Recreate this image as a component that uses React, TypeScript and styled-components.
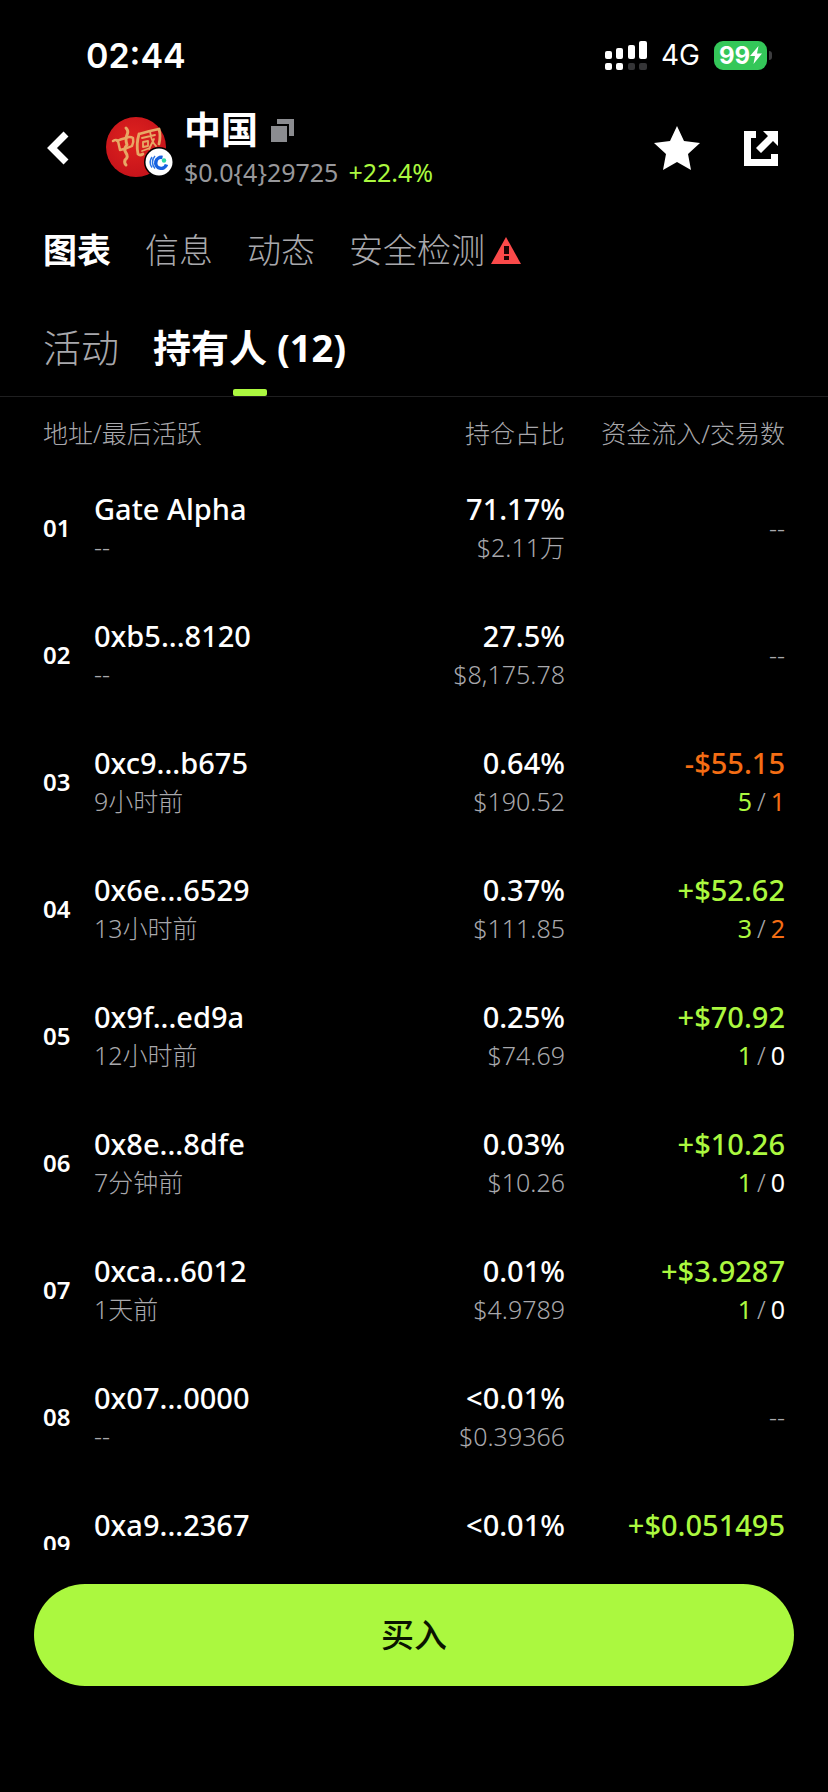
import React from "react";
import styled, { createGlobalStyle } from "styled-components";

const lime = "#abf83f";
const orange = "#f46d14";
const muted = "#98989b";
const mutedThin = "#a8a8ac";

const GlobalStyle = createGlobalStyle`
  * { box-sizing: border-box; }
  body {
    margin: 0;
    background: #000;
    color: #fff;
    font-family: "Noto Sans", "Noto Sans CJK SC", sans-serif;
  }
  button { font: inherit; color: inherit; background: none; border: 0; padding: 0; cursor: pointer; }
  svg { display: block; }
`;

const Screen = styled.div`
  display: flex;
  flex-direction: column;
  height: 100vh;
  background: #000;
`;

const StatusBar = styled.div`
  display: flex;
  align-items: center;
  justify-content: space-between;
  height: 106px;
  padding: 4px 56px 0 86px;
  font-family: Inter, sans-serif;
`;

const Clock = styled.span`
  font-size: 34px;
  font-weight: 600;
`;

const StatusIcons = styled.div`
  display: flex;
  align-items: center;
  gap: 14px;
`;

const Network = styled.span`
  font-size: 28px;
  font-weight: 400;
`;

const Battery = styled.div`
  display: flex;
  align-items: center;
  gap: 2px;
`;

const BatteryBody = styled.div`
  display: flex;
  align-items: center;
  justify-content: center;
  width: 53px;
  height: 29px;
  border-radius: 9px;
  background: #34c759;
  font-size: 24px;
  font-weight: 700;
`;

const BatteryCap = styled.div`
  width: 3px;
  height: 9px;
  border-radius: 0 3px 3px 0;
  background: #3c3c3e;
`;

const TokenHeader = styled.header`
  display: flex;
  align-items: center;
  height: 84px;
  padding: 0 50px 0 47px;
`;

const AvatarBox = styled.div`
  position: relative;
  margin: 0 0 3px 37px;
`;

const Badge = styled.div`
  position: absolute;
  right: -8px;
  bottom: 0;
`;

const TokenText = styled.div`
  display: flex;
  flex-direction: column;
  flex: 1;
  margin-left: 18px;
`;

const TitleLine = styled.div`
  display: flex;
  align-items: center;
  gap: 13px;
`;

const Title = styled.h1`
  margin: 0;
  font-size: 37px;
  line-height: 48px;
  font-weight: 700;
`;

const PriceLine = styled.div`
  display: flex;
  gap: 10px;
  font-size: 25px;
  line-height: 36px;
  color: ${muted};
`;

const Change = styled.span`
  color: ${lime};
`;

const Actions = styled.div`
  display: flex;
  align-items: center;
  gap: 44px;
`;

const PrimaryTabs = styled.nav`
  display: flex;
  align-items: center;
  gap: 34px;
  height: 116px;
  padding: 4px 43px 0;
`;

const PrimaryTab = styled.button<{ $active?: boolean }>`
  display: flex;
  align-items: center;
  gap: 6px;
  font-size: 34px;
  line-height: 48px;
  font-weight: ${(p) => (p.$active ? 700 : 300)};
  color: ${(p) => (p.$active ? "#fff" : mutedThin)};
`;

const SubTabs = styled.nav`
  display: flex;
  gap: 34px;
  height: 91px;
  padding: 0 43px;
  border-bottom: 1px solid #1f1f20;
`;

const SubTab = styled.button<{ $active?: boolean }>`
  display: flex;
  flex-direction: column;
  align-items: center;
  justify-content: space-between;
  padding-top: 17px;
  font-size: 38px;
  line-height: 48px;
  font-weight: ${(p) => (p.$active ? 700 : 300)};
  color: ${(p) => (p.$active ? "#fff" : mutedThin)};
`;

const Underline = styled.span`
  width: 34px;
  height: 7px;
  border-radius: 2px;
  background: ${lime};
`;

const ListArea = styled.main`
  flex: 1;
  min-height: 0;
  overflow-y: auto;
  scrollbar-width: none;
  padding: 0 43px;
`;

const Table = styled.table`
  width: 100%;
  table-layout: fixed;
  border-collapse: collapse;
`;

const HeadCell = styled.th<{ $right?: boolean }>`
  height: 67px;
  padding: 4px 0 0;
  font-size: 25px;
  line-height: 36px;
  font-weight: 300;
  white-space: nowrap;
  color: ${mutedThin};
  text-align: ${(p) => (p.$right ? "right" : "left")};
`;

const Cell = styled.td<{ $right?: boolean }>`
  height: 127px;
  padding: 0;
  white-space: nowrap;
  text-align: ${(p) => (p.$right ? "right" : "left")};
`;

const Rank = styled.span`
  font-size: 24px;
  font-weight: 600;
`;

const toneColor = { plain: "#fff", up: lime, down: orange };
type Tone = keyof typeof toneColor;

const MainText = styled.div<{ $tone?: Tone }>`
  font-size: 29px;
  line-height: 38px;
  font-weight: 500;
  color: ${(p) => toneColor[p.$tone ?? "plain"]};
`;

const SubText = styled.div`
  font-size: 25px;
  line-height: 38px;
  font-weight: 300;
  color: ${mutedThin};
`;

const Trades = styled(SubText)`
  display: flex;
  justify-content: flex-end;
  gap: 5px;
`;

const Count = styled.span<{ $tone: Tone }>`
  font-weight: 400;
  color: ${(p) => toneColor[p.$tone]};
`;

const Footer = styled.footer`
  padding: 34px 34px 106px;
`;

const BuyButton = styled.button`
  width: 100%;
  height: 102px;
  padding-bottom: 4px;
  border-radius: 51px;
  background: ${lime};
  color: #0a1400;
  font-size: 33px;
  font-weight: 500;
`;

type Holder = {
  name: string;
  seen: string;
  share: string;
  value: string;
  flow?: string;
  buys?: number;
  sells?: number;
};

const holders: Holder[] = [
  { name: "Gate Alpha", seen: "--", share: "71.17%", value: "$2.11万" },
  { name: "0xb5...8120", seen: "--", share: "27.5%", value: "$8,175.78" },
  { name: "0xc9...b675", seen: "9小时前", share: "0.64%", value: "$190.52", flow: "-$55.15", buys: 5, sells: 1 },
  { name: "0x6e...6529", seen: "13小时前", share: "0.37%", value: "$111.85", flow: "+$52.62", buys: 3, sells: 2 },
  { name: "0x9f...ed9a", seen: "12小时前", share: "0.25%", value: "$74.69", flow: "+$70.92", buys: 1, sells: 0 },
  { name: "0x8e...8dfe", seen: "7分钟前", share: "0.03%", value: "$10.26", flow: "+$10.26", buys: 1, sells: 0 },
  { name: "0xca...6012", seen: "1天前", share: "0.01%", value: "$4.9789", flow: "+$3.9287", buys: 1, sells: 0 },
  { name: "0x07...0000", seen: "--", share: "<0.01%", value: "$0.39366" },
  { name: "0xa9...2367", seen: "1天前", share: "<0.01%", value: "$0.051495", flow: "+$0.051495", buys: 1, sells: 0 },
];

const SignalIcon = () => (
  <svg width="42" height="29" viewBox="0 0 42 29" aria-hidden="true">
    <g fill="#fff">
      <rect x="0" y="10" width="7" height="8" rx="2" />
      <rect x="11" y="7" width="7" height="11" rx="2" />
      <rect x="23" y="4" width="7" height="14" rx="2" />
      <rect x="34" y="0" width="8" height="18" rx="2" />
      <rect x="0" y="22" width="7" height="7" rx="2" />
      <rect x="11" y="22" width="7" height="7" rx="2" />
    </g>
    <rect x="23" y="22" width="7" height="7" rx="2" fill="#353537" />
    <rect x="34" y="22" width="8" height="7" rx="2" fill="#353537" />
  </svg>
);

const BoltIcon = () => (
  <svg width="12" height="18" viewBox="0 0 12 18" aria-hidden="true">
    <path d="M8.5 0L0 10h5L3.5 18 12 7.500H7z" fill="#fff" />
  </svg>
);

const BackIcon = () => (
  <svg width="22" height="34" viewBox="0 0 22 34" aria-hidden="true">
    <path d="M19 3L5 17l14 14" fill="none" stroke="#fff" strokeWidth="7" />
  </svg>
);

const TokenAvatar = () => (
  <svg width="60" height="60" viewBox="0 0 60 60" aria-hidden="true">
    <defs>
      <radialGradient id="red" cx="45%" cy="40%" r="65%">
        <stop offset="0" stopColor="#e0231f" />
        <stop offset="1" stopColor="#c4121a" />
      </radialGradient>
    </defs>
    <circle cx="30" cy="30" r="30" fill="url(#red)" />
    <g fill="none" stroke="#e8a765" strokeLinecap="round" strokeLinejoin="round">
      <path d="M7 24q3-2 5 0l2 9q6-1 12-4 2-4 1-8-3-2-7 0-5 1-9 3" strokeWidth="2.500" />
      <path d="M20 11q3 3 1 7t0 10q-4 4-1 8t-1 7q-1 3 1 5" strokeWidth="3" />
      <path d="M33 17q-3 10-1 20 2 2 5 0M33 17q10-3 20-5 2 7 0 15" strokeWidth="2.800" />
      <path d="M36 21l13-3M37 25l5-1v5l-5 1zM44 14q1 10 6 15M36 34l8-3M48 22l-5 10" strokeWidth="1.800" />
    </g>
  </svg>
);

const ChainBadge = () => (
  <svg width="30" height="30" viewBox="0 0 30 30" aria-hidden="true">
    <circle cx="15" cy="15" r="15" fill="#000" />
    <circle cx="15" cy="15" r="13.500" fill="#fff" />
    <path d="M18.500 10.500a5.500 5.500 0 1 0 4 7" fill="none" stroke="#1762e0" strokeWidth="3.500" />
    <path d="M11 9a9 9 0 0 0 0 12.500M8 10a9 9 0 0 0 0 10.500" fill="none" stroke="#2a74e5" strokeWidth="1.500" />
    <circle cx="20" cy="13.500" r="2.200" fill="#2bd9a5" />
  </svg>
);

const CopyIcon = () => (
  <svg width="23" height="23" viewBox="0 0 23 23" aria-hidden="true">
    <path d="M0 7h16v16H0zM6 0h17v17h-5V5H6z" fill="#8b8c90" />
  </svg>
);

const StarIcon = () => (
  <svg width="46" height="44" viewBox="0 0 46 44" aria-hidden="true">
    <path d="M23 0l7 15 16 2-12 11 3 16-14-8-14 8 3-16L0 17l16-2z" fill="#fff" />
  </svg>
);

const ShareIcon = () => (
  <svg width="34" height="35" viewBox="0 0 34 35" aria-hidden="true">
    <path d="M0 0h12v7H7v21h20v-5h7v12H0z" fill="#fff" />
    <path d="M19 0h15v15l-5-5-12 12-5-5L24 5z" fill="#fff" />
  </svg>
);

const WarningIcon = () => (
  <svg width="30" height="27" viewBox="0 0 30 27" aria-hidden="true">
    <path d="M15 0l15 27H0z" fill="#fb4a4a" />
    <path d="M13 9h5v8h-5zM13 19h5v4h-5z" fill="#1a0505" />
  </svg>
);

export default function App() {
  return (
    <Screen>
      <GlobalStyle />
      <StatusBar>
        <Clock>02:44</Clock>
        <StatusIcons>
          <SignalIcon />
          <Network>4G</Network>
          <Battery>
            <BatteryBody>
              99
              <BoltIcon />
            </BatteryBody>
            <BatteryCap />
          </Battery>
        </StatusIcons>
      </StatusBar>

      <TokenHeader>
        <button aria-label="返回"><BackIcon /></button>
        <AvatarBox>
          <TokenAvatar />
          <Badge><ChainBadge /></Badge>
        </AvatarBox>
        <TokenText>
          <TitleLine>
            <Title>中国</Title>
            <button aria-label="复制"><CopyIcon /></button>
          </TitleLine>
          <PriceLine>
            <span>{"$0.0{4}29725"}</span>
            <Change>+22.4%</Change>
          </PriceLine>
        </TokenText>
        <Actions>
          <button aria-label="收藏"><StarIcon /></button>
          <button aria-label="分享"><ShareIcon /></button>
        </Actions>
      </TokenHeader>

      <PrimaryTabs>
        <PrimaryTab $active>图表</PrimaryTab>
        <PrimaryTab>信息</PrimaryTab>
        <PrimaryTab>动态</PrimaryTab>
        <PrimaryTab>安全检测<WarningIcon /></PrimaryTab>
      </PrimaryTabs>

      <SubTabs>
        <SubTab>活动</SubTab>
        <SubTab $active>
          <span>持有人 (12)</span>
          <Underline />
        </SubTab>
      </SubTabs>

      <ListArea>
        <Table>
          <colgroup>
            <col style={{ width: 51 }} />
            <col />
            <col style={{ width: 200 }} />
            <col style={{ width: 220 }} />
          </colgroup>
          <thead>
            <tr>
              <HeadCell colSpan={2}>地址/最后活跃</HeadCell>
              <HeadCell $right>持仓占比</HeadCell>
              <HeadCell $right>资金流入/交易数</HeadCell>
            </tr>
          </thead>
          <tbody>
            {holders.map((h, i) => (
              <tr key={h.name}>
                <Cell><Rank>{String(i + 1).padStart(2, "0")}</Rank></Cell>
                <Cell>
                  <MainText>{h.name}</MainText>
                  <SubText>{h.seen}</SubText>
                </Cell>
                <Cell $right>
                  <MainText>{h.share}</MainText>
                  <SubText>{h.value}</SubText>
                </Cell>
                <Cell $right>
                  {h.flow ? (
                    <>
                      <MainText $tone={h.flow.startsWith("-") ? "down" : "up"}>{h.flow}</MainText>
                      <Trades>
                        <Count $tone="up">{h.buys}</Count>
                        <span>/</span>
                        <Count $tone={h.sells ? "down" : "plain"}>{h.sells}</Count>
                      </Trades>
                    </>
                  ) : (
                    <SubText>--</SubText>
                  )}
                </Cell>
              </tr>
            ))}
          </tbody>
        </Table>
      </ListArea>

      <Footer>
        <BuyButton>买入</BuyButton>
      </Footer>
    </Screen>
  );
}
